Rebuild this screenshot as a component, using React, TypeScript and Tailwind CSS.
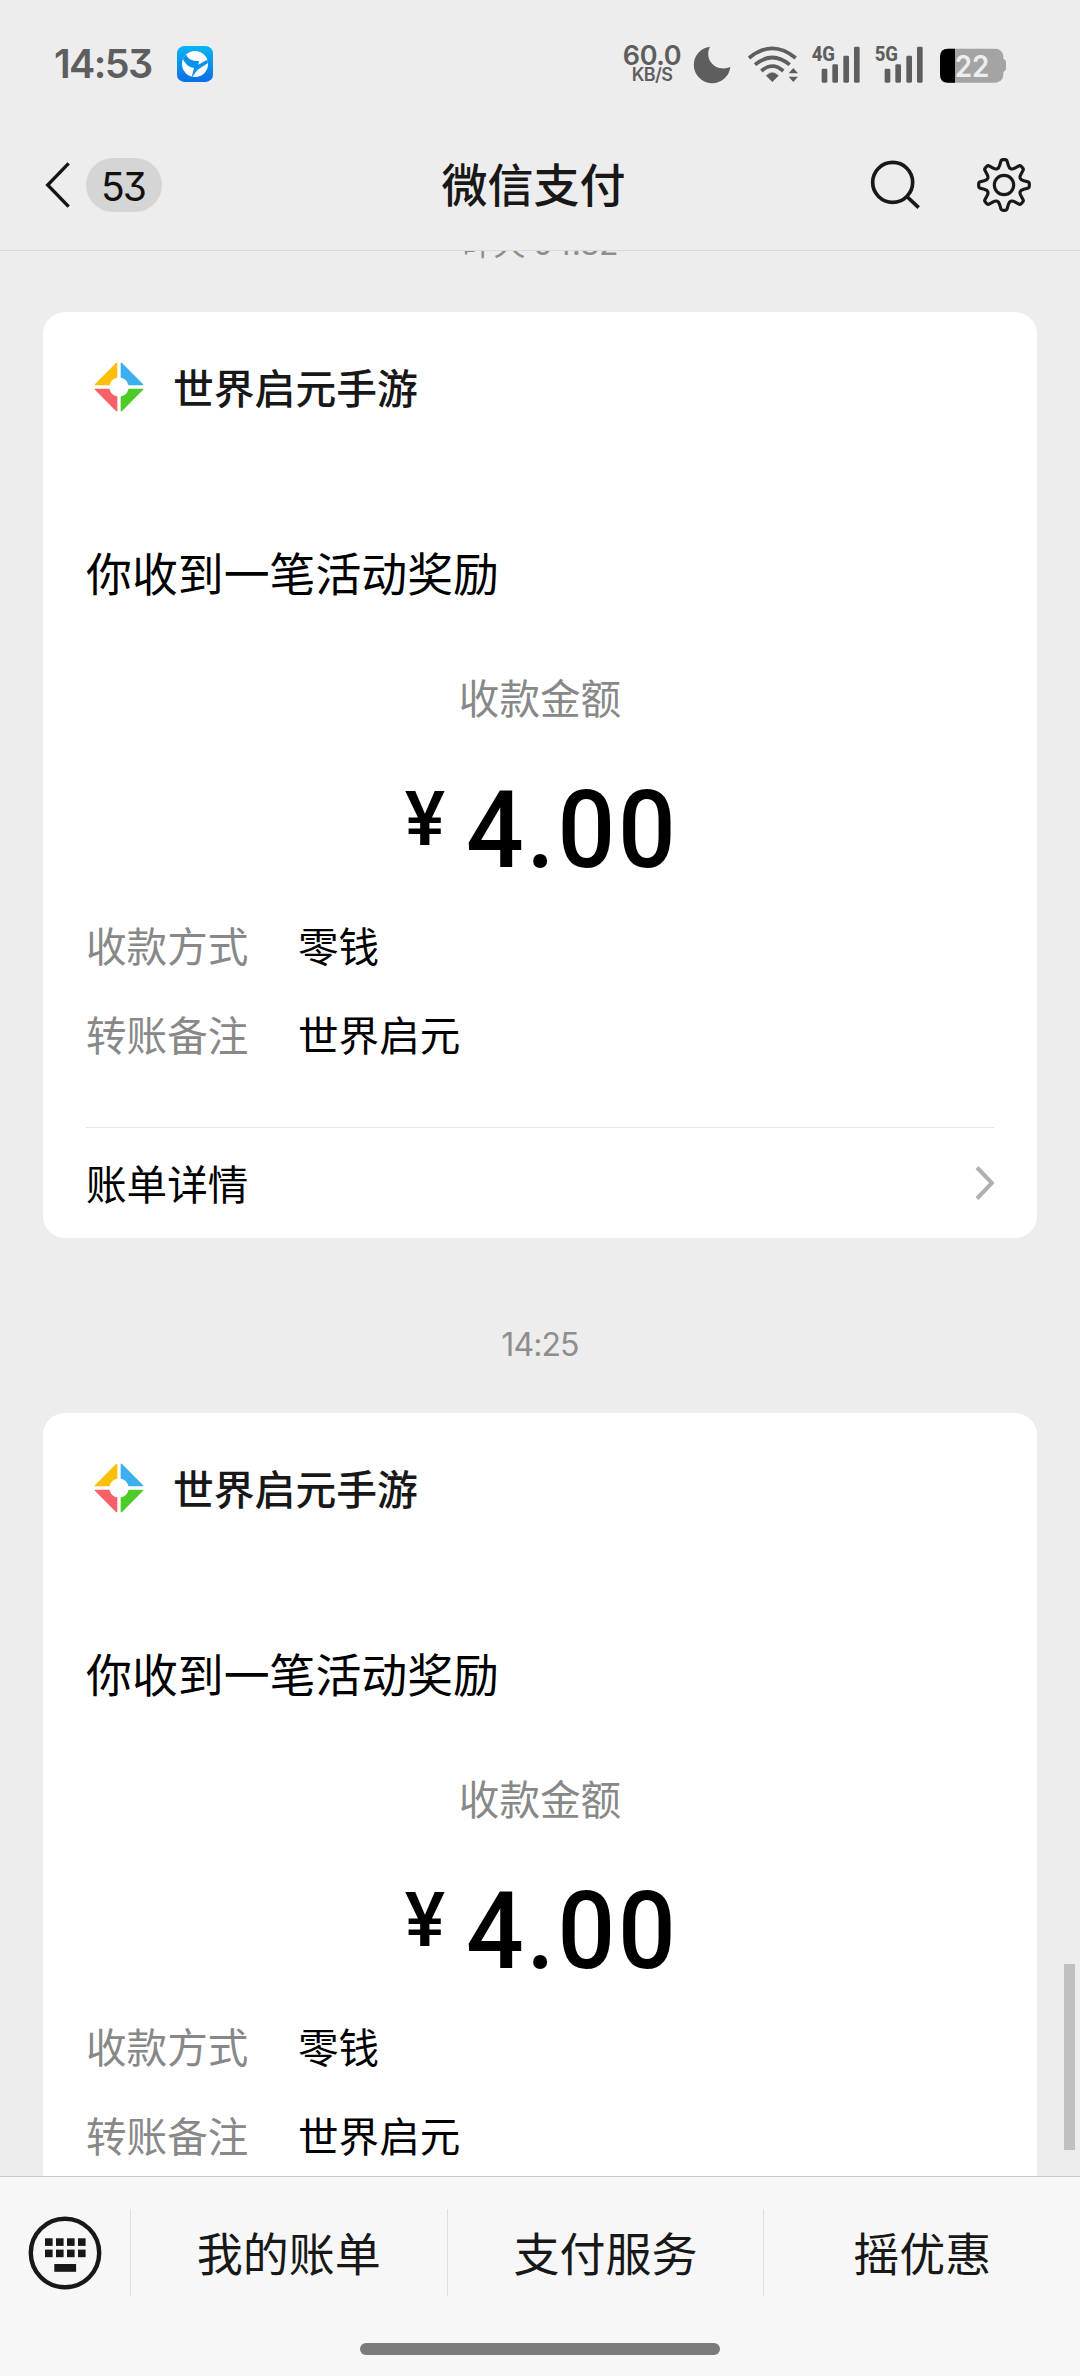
const CJK = "font-['Noto_Sans_CJK_SC',sans-serif]";
const NUM = "font-[Inter,'Noto_Sans_CJK_SC',sans-serif] [font-feature-settings:'cv09']";

/* ---------- status bar ---------- */

function AppBadge() {
  return (
    <svg className="ml-[24px] h-[38px] w-[38px] shrink-0" viewBox="528 78 114 114">
      <defs>
        <linearGradient id="badge" x1="0" y1="0" x2="0" y2="1">
          <stop offset="0" stopColor="#0cb4f2" />
          <stop offset="1" stopColor="#0a6fe6" />
        </linearGradient>
        <clipPath id="disc">
          <circle cx="585" cy="135" r="39" />
        </clipPath>
      </defs>
      <rect x="531" y="81" width="108" height="108" rx="22" fill="url(#badge)" />
      <circle cx="585" cy="135" r="39" fill="#fff" />
      <g clipPath="url(#disc)">
        <path
          fill="#0b90ec"
          d="M540 96L558 106Q566 129 597 126L595 137L626 120V131L592 153L574 178L582 147Q556 143 546 113Z"
        />
      </g>
    </svg>
  );
}

function Signal({ label, className }: { label: string; className: string }) {
  return (
    <svg className={`h-[40px] w-[53.33px] shrink-0 ${className}`} viewBox="0 0 160 120" fill="#5e5e5e">
      <text
        x="5"
        y="52"
        fontFamily="Roboto, sans-serif"
        fontWeight="800"
        fontSize="63"
        textLength="70"
        lengthAdjust="spacingAndGlyphs"
      >
        {label}
      </text>
      <rect x="35" y="74" width="17" height="42" rx="4" />
      <rect x="67" y="61" width="17" height="55" rx="4" />
      <rect x="100" y="35" width="17" height="81" rx="4" />
      <rect x="132" y="8" width="17" height="108" rx="4" />
    </svg>
  );
}

function StatusBar() {
  return (
    <div className="flex h-[127px] shrink-0 items-center text-[#5e5e5e]">
      <div className={`${NUM} ml-[54px] w-[98px] pt-[1px] text-[39.5px] leading-[40px] font-semibold tracking-[-1.6px] whitespace-nowrap`}>
        14:53
      </div>
      <AppBadge />
      <div className="flex-1" />
      <div className="flex w-[62px] flex-col items-center pt-[2px]">
        <span className={`${NUM} text-[27px] leading-[21px] font-semibold tracking-[-0.4px]`}>60.0</span>
        <span className={`${NUM} text-[18px] leading-[18px] font-semibold tracking-[-0.6px]`}>KB/S</span>
      </div>
      <svg className="ml-[9px] h-[40px] w-[40px] shrink-0" viewBox="276 70 120 120" fill="#5e5e5e">
        <path d="M330 78A55 55 0 1 0 391 139C350 156 310 118 330 78Z" />
      </svg>
      <svg className="ml-[14.67px] h-[40px] w-[53.33px] shrink-0" viewBox="440 70 160 120" fill="none">
        <g stroke="#5e5e5e" strokeWidth="11">
          <path d="M446 112Q516 54 586 112" />
          <path d="M464 132Q516 89 568 132" />
          <path d="M483 151Q516 122 549 151" />
        </g>
        <path d="M516 183L498 165Q516 147 534 165Z" fill="#5e5e5e" stroke="#5e5e5e" strokeWidth="2" />
        <path d="M579 142L593 158H565ZM579 184L593 168H565Z" fill="#5e5e5e" />
      </svg>
      <Signal label="4G" className="ml-[10px]" />
      <Signal label="5G" className="ml-[10px]" />
      <svg className="mr-[72px] ml-[11.33px] h-[40px] w-[70px] shrink-0" viewBox="1014 70 210 120">
        <rect x="1020" y="84" width="190" height="102" rx="24" fill="#a4a4a4" />
        <path d="M1208 114Q1218 116 1218 126V142Q1218 152 1208 154Z" fill="#a4a4a4" />
        <path d="M1065 84V186H1044Q1020 186 1020 162V108Q1020 84 1044 84Z" fill="#000" />
        <text x="1064" y="169" fontFamily="Inter, sans-serif" fontWeight="600" fontSize="88" fill="#ededed" textLength="104" lengthAdjust="spacingAndGlyphs">
          22
        </text>
      </svg>
    </div>
  );
}

/* ---------- navigation bar ---------- */

function rotate(x: number, y: number, deg: number) {
  const a = (deg * Math.PI) / 180;
  return `${(x * Math.cos(a) - y * Math.sin(a)).toFixed(2)} ${(x * Math.sin(a) + y * Math.cos(a)).toFixed(2)}`;
}

function gearPath() {
  let d = "";
  for (let i = 0; i < 8; i++) {
    const p = (x: number, y: number) => rotate(x, y, i * 45);
    d += `${i === 0 ? "M" : "L"}${p(-13, -59)}L${p(-9.5, -71)}Q${p(-8, -76)} ${p(-3, -76)}L${p(3, -76)}Q${p(8, -76)} ${p(9.5, -71)}L${p(13, -59)}`;
    d += `Q${p(17.6, -42.5)} ${rotate(-13, -59, (i + 1) * 45)}`;
  }
  return d + "Z";
}

function NavBar() {
  return (
    <div className="flex h-[123px] shrink-0 items-center pb-[7px]">
      <div className="flex w-[300px] items-center">
        <svg className="ml-[43px] h-[50px] w-[30px]" viewBox="129 420 90 150" fill="none">
          <path d="M206 430L143 495L206 560" stroke="#141414" strokeWidth="10" />
        </svg>
        <div className={`${NUM} ml-[13px] flex h-[54px] w-[76px] items-center justify-center rounded-full bg-[#d5d5d5] pt-[2px] pr-[2px] text-[39px] leading-none tracking-[-2px] text-[#111]`}>
          53
        </div>
      </div>
      <div className={`${CJK} flex-1 pr-[79px] pb-[6px] text-center text-[46px] leading-[60px] font-medium text-[#181818]`}>
        微信支付
      </div>
      <div className="flex w-[234px] items-center">
        <svg className="ml-[20px] h-[60px] w-[60px]" viewBox="78 45 180 180" fill="none" stroke="#181818" strokeWidth="11">
          <circle cx="158" cy="127" r="60" />
          <path d="M199 168L236 203" />
        </svg>
        <svg className="ml-[48px] h-[60px] w-[60px]" viewBox="-90 -90 180 180" fill="none" stroke="#181818" strokeWidth="9.5">
          <path d={gearPath()} strokeLinejoin="round" />
          <circle r="29" />
        </svg>
      </div>
    </div>
  );
}

/* ---------- messages ---------- */

function GameLogo() {
  return (
    <svg className="mt-[2px] h-[54px] w-[54px]" viewBox="-81 -81 162 162" strokeWidth="4" strokeLinejoin="round">
      <path d="M-7 -71V-30A31 31 0 0 0 -30 -7H-71Z" fill="#fbbf0a" stroke="#fbbf0a" />
      <path d="M7 -71V-30A31 31 0 0 1 30 -7H71Z" fill="#3dafee" stroke="#3dafee" />
      <path d="M-7 71V30A31 31 0 0 1 -30 7H-71Z" fill="#f76066" stroke="#f76066" />
      <path d="M7 71V30A31 31 0 0 0 30 7H71Z" fill="#4dcb28" stroke="#4dcb28" />
    </svg>
  );
}

function Timestamp({ children, className }: { children: string; className: string }) {
  return (
    <div className={`${NUM} h-[60px] text-center text-[32px] leading-[60px] tracking-[-0.9px] text-[#8e8e8e] ${className}`}>
      {children}
    </div>
  );
}

function Field({ label, value, className }: { label: string; value: string; className: string }) {
  return (
    <div className={`flex h-[60px] text-[40.6px] leading-[60px] ${className}`}>
      <span className="w-[212px] text-[#888]">{label}</span>
      <span className="text-black">{value}</span>
    </div>
  );
}

function PaymentCard() {
  return (
    <div className={`${CJK} mx-[43px] mt-[38px] h-[926px] rounded-[22px] bg-white px-[43px]`}>
      <div className="flex h-[148px] items-center">
        <div className="ml-[6px]">
          <GameLogo />
        </div>
        <span className="ml-[27px] pt-[2px] text-[40.8px] leading-[60px] font-medium text-[#181818]">世界启元手游</span>
      </div>
      <div className="mt-[81px] h-[60px] text-[45.9px] leading-[60px] text-black">你收到一笔活动奖励</div>
      <div className="mt-[71px] h-[50px] text-center text-[40.6px] leading-[50px] text-[#888]">收款金额</div>
      <div className="mt-[58px] flex h-[100px] items-start justify-center pl-[17px] font-[Roboto,sans-serif] font-medium text-black">
        <span className="text-[76px] leading-[79px]">¥</span>
        <span className="ml-[21px] origin-left scale-x-[0.94] text-[108px] leading-[100px] tracking-[3px]">4.00</span>
      </div>
      <Field className="mt-[35px]" label="收款方式" value="零钱" />
      <Field className="mt-[29px]" label="转账备注" value="世界启元" />
      <div className="mt-[63px] flex h-[111px] items-center justify-between border-t border-[#e5e5e5]">
        <span className="text-[40.6px] leading-[60px] text-black">账单详情</span>
        <svg className="h-[36px] w-[19px]" viewBox="0 0 19 36" fill="none">
          <path d="M2 2.5L17 18L2 33.5" stroke="#b0b0b0" strokeWidth="4" />
        </svg>
      </div>
    </div>
  );
}

/* ---------- bottom menu ---------- */

function KeyboardIcon() {
  const cols = [-20, -9, 2, 13];
  return (
    <svg className="h-[76px] w-[76px]" viewBox="-38 -38 76 76">
      <circle r="34.2" fill="none" stroke="#181818" strokeWidth="4.4" />
      {cols.map((x) => (
        <g key={x} fill="#181818">
          <rect x={x} y="-14.7" width="7.6" height="7.6" />
          <rect x={x} y="-3.4" width="7.6" height="7.6" />
        </g>
      ))}
      <rect x="-10.7" y="11" width="21.8" height="7.8" fill="#181818" />
    </svg>
  );
}

function BottomBar() {
  return (
    <div className="h-[200px] shrink-0 border-t border-[#c8c8c8] bg-[#f7f7f7]">
      <div className="flex h-[151px] items-center">
        <div className="flex w-[130px] justify-center">
          <KeyboardIcon />
        </div>
        {["我的账单", "支付服务", "摇优惠"].map((item) => (
          <div
            key={item}
            className={`${CJK} flex h-[87px] flex-1 items-center justify-center border-l border-[#dedede] pb-[3px] text-[46px] leading-none text-[#181818]`}
          >
            {item}
          </div>
        ))}
      </div>
      <div className="mx-auto mt-[15px] h-[12px] w-[360px] rounded-full bg-[#7b7b7b]" />
    </div>
  );
}

export default function App() {
  return (
    <div className="flex h-[2376px] w-[1080px] flex-col overflow-hidden bg-[#ededed]">
      <StatusBar />
      <NavBar />
      <div className="relative h-[1926px] shrink-0 overflow-hidden border-t border-[#dadada]">
        <div className="-mt-[37px]">
          <Timestamp className="">昨天 04:32</Timestamp>
          <PaymentCard />
          <Timestamp className="mt-[77px]">14:25</Timestamp>
          <PaymentCard />
        </div>
        <div className="absolute top-[1713px] right-[5px] h-[186px] w-[11px] bg-[#c0c0c0]" />
      </div>
      <BottomBar />
    </div>
  );
}
